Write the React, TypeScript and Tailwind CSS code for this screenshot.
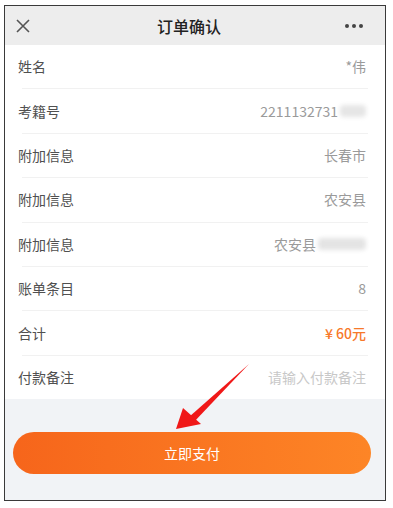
import React from 'react';

const font = { fontFamily: '"Noto Sans CJK SC", "Noto Sans", sans-serif' };

type Row = { label: string; value: React.ReactNode };

const rows: Row[] = [
  { label: '姓名', value: <span>*伟</span> },
  {
    label: '考籍号',
    value: (
      <span className="flex items-center">
        2211132731
        <span className="ml-0.5 inline-block h-[12px] w-[26px] rounded-sm bg-[#e6e6e6] blur-[2px]" />
      </span>
    ),
  },
  { label: '附加信息', value: <span>长春市</span> },
  { label: '附加信息', value: <span>农安县</span> },
  {
    label: '附加信息',
    value: (
      <span className="flex items-center">
        农安县
        <span className="ml-0.5 inline-block h-[12px] w-[48px] rounded-sm bg-[#e4e4e4] blur-[2px]" />
      </span>
    ),
  },
  { label: '账单条目', value: <span>8</span> },
  { label: '合计', value: <span className="font-medium text-[#f7792a]">¥ 60元</span> },
  { label: '付款备注', value: <span className="text-[#c8c8c8]">请输入付款备注</span> },
];

export default function App() {
  return (
    <div className="h-[508px] w-[393px] bg-white pl-[4px] pt-[5px]" style={font}>
      <div className="relative flex h-[496px] w-[382px] flex-col border border-[#3a3a3a] bg-[#f1f3f6]">
        <div className="grid h-[39px] grid-cols-[1fr_auto_1fr] items-center bg-[#ededed] pl-[10px] pr-[22px]">
          <svg width="16" height="16" viewBox="0 0 16 16" className="text-[#555]">
            <path d="M2 2L14 14M14 2L2 14" stroke="currentColor" strokeWidth="1.6" />
          </svg>
          <div className="text-[16px] font-medium text-[#222]">订单确认</div>
          <div className="flex justify-end gap-[3px]">
            <span className="h-[4px] w-[4px] rounded-full bg-[#444]" />
            <span className="h-[4px] w-[4px] rounded-full bg-[#444]" />
            <span className="h-[4px] w-[4px] rounded-full bg-[#444]" />
          </div>
        </div>
        <div className="bg-white">
          {rows.map((r, i) => (
            <React.Fragment key={i}>
              {i > 0 && <div className="mx-[17px] h-px bg-[#f1f1f1]" />}
              <div className="flex h-[43.4px] items-center justify-between pl-[13px] pr-[19px] text-[14px]">
                <span className="text-[#505050]">{r.label}</span>
                <span className="text-[#9a9a9a]">{r.value}</span>
              </div>
            </React.Fragment>
          ))}
        </div>
        <div className="flex flex-1 flex-col pl-[8px] pr-[14px] pt-[33px]">
          <button className="flex h-[42px] w-full items-center justify-center rounded-full bg-gradient-to-r from-[#f6651b] to-[#fd8526] text-[14px] text-white">
            立即支付
          </button>
        </div>
        <svg className="pointer-events-none absolute left-[166px] top-[356px]" width="80" height="70" viewBox="0 0 80 70">
          <path d="M78 2 L18 55 L22 61 Z" fill="#f01818" />
          <path d="M5 67 L12 46 L30 62 Z" fill="#f01818" />
        </svg>
      </div>
    </div>
  );
}
